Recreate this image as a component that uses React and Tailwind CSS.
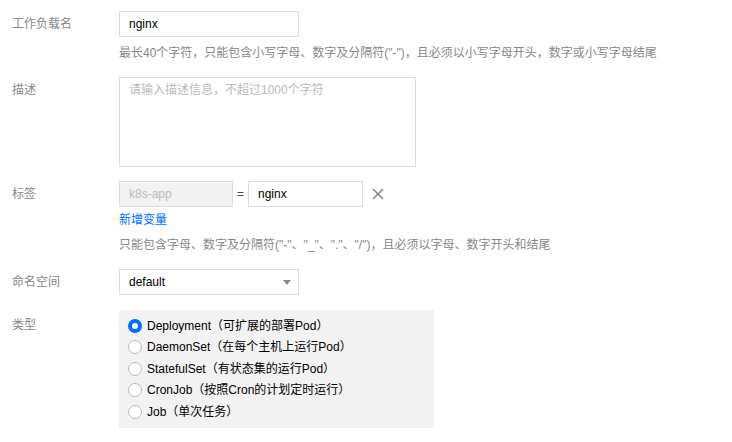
import React from "react";

const types = [
  "Deployment（可扩展的部署Pod）",
  "DaemonSet（在每个主机上运行Pod）",
  "StatefulSet（有状态集的运行Pod）",
  "CronJob（按照Cron的计划定时运行）",
  "Job（单次任务）",
];

function Label({ children, className = "" }) {
  return (
    <div className={`w-[119px] shrink-0 pl-3 text-[12px] leading-[26px] text-[#888] ${className}`}>
      {children}
    </div>
  );
}

function Box({ children, className = "" }) {
  return (
    <div className={`h-[26px] border border-[#ddd] px-[9px] text-[12px] leading-[24px] ${className}`}>
      {children}
    </div>
  );
}

export default function App() {
  const font = { fontFamily: '"Liberation Sans", Arial, "Noto Sans CJK SC", sans-serif' };
  return (
    <div className="w-[732px] h-[442px] bg-white pt-[11px]" style={font}>
      {/* 工作负载名 */}
      <div className="flex">
        <Label>工作负载名</Label>
        <div className="flex flex-col">
          <Box className="w-[180px] text-black">nginx</Box>
          <div className="mt-[8px] text-[12px] leading-4 text-[#888]">
            最长40个字符，只能包含小写字母、数字及分隔符("-")，且必须以小写字母开头，数字或小写字母结尾
          </div>
        </div>
      </div>

      {/* 描述 */}
      <div className="flex mt-[16px]">
        <Label>描述</Label>
        <div className="w-[297px] h-[90px] border border-[#ddd] px-[9px] pt-[3px] text-[12px] leading-[18px] text-[#bbb]">
          请输入描述信息，不超过1000个字符
        </div>
      </div>

      {/* 标签 */}
      <div className="flex mt-[14px]">
        <Label>标签</Label>
        <div className="flex flex-col">
          <div className="flex items-center">
            <Box className="w-[114px] bg-[#f2f2f2] text-[#bbb]">k8s-app</Box>
            <span className="w-[15px] text-center text-[12px] text-[#444]">=</span>
            <Box className="w-[115px] text-black">nginx</Box>
            <svg className="ml-[9px]" width="12" height="12" viewBox="0 0 12 12">
              <path d="M1 1L11 11M11 1L1 11" stroke="#888" strokeWidth="1.6" />
            </svg>
          </div>
          <div className="mt-[4px] text-[12px] leading-[18px] text-[#006eff]">新增变量</div>
          <div className="mt-[8px] text-[12px] leading-4 text-[#888]">
            只能包含字母、数字及分隔符("-"、"_"、"."、"/")，且必须以字母、数字开头和结尾
          </div>
        </div>
      </div>

      {/* 命名空间 */}
      <div className="flex mt-[16px]">
        <Label>命名空间</Label>
        <div className="w-[180px] h-[26px] border border-[#ddd] pl-[9px] pr-[7px] flex items-center justify-between text-[12px] text-black">
          <span>default</span>
          <svg width="8" height="5" viewBox="0 0 8 5">
            <path d="M0 0H8L4 5Z" fill="#888" />
          </svg>
        </div>
      </div>

      {/* 类型 */}
      <div className="flex mt-[15px]">
        <Label className="pt-[2px]">类型</Label>
        <div className="w-[315px] bg-[#f2f2f2] pl-[9px] pt-[5px] pb-[5px]">
          {types.map((t, i) => (
            <div key={t} className="flex items-center h-[21.5px]">
              {i === 0 ? (
                <span className="w-[14px] h-[14px] rounded-full border-[4px] border-[#006eff] bg-white box-border" />
              ) : (
                <span className="w-[14px] h-[14px] rounded-full border border-[#bbb] bg-white box-border" />
              )}
              <span className="ml-[5px] text-[12px] text-black">{t}</span>
            </div>
          ))}
        </div>
      </div>
    </div>
  );
}
